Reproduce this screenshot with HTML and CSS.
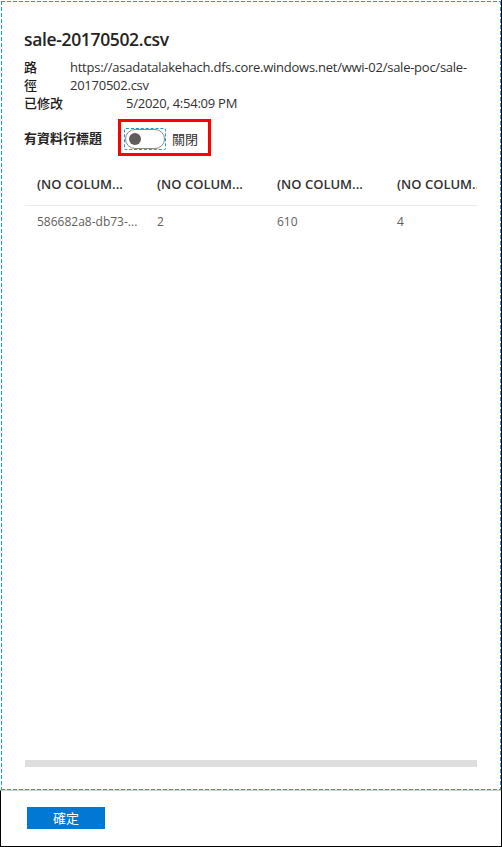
FILE: index.html
```html
<!DOCTYPE html>
<html lang="zh-Hant">
<head>
<meta charset="utf-8">
<link rel="stylesheet" href="styles.css">
</head>
<body>
<div class="frame">
  <div class="main">
    <h1 class="title">sale-20170502.csv</h1>
    <div class="prop prop-path">
      <div class="label label-path">路徑</div>
      <div class="value">https://asadatalakehach.dfs.core.windows.net/wwi-02/sale-poc/sale-20170502.csv</div>
    </div>
    <div class="prop prop-mod">
      <div class="label label-mod">已修改</div>
      <div class="value value-mod">5/2020, 4:54:09 PM</div>
    </div>
    <div class="header-row">
      <div class="label-strong">有資料行標題</div>
      <div class="highlight">
        <div class="toggle-focus">
          <div class="toggle"><span class="knob"></span></div>
        </div>
        <span class="toggle-text">關閉</span>
      </div>
    </div>
    <div class="table-wrap">
      <div class="trow thead">
        <div class="cell">(NO COLUM...</div>
        <div class="cell">(NO COLUM...</div>
        <div class="cell">(NO COLUM...</div>
        <div class="cell">(NO COLUM...</div>
      </div>
      <div class="trow tbody">
        <div class="cell">586682a8-db73-...</div>
        <div class="cell">2</div>
        <div class="cell">610</div>
        <div class="cell">4</div>
      </div>
    </div>
    <div class="spacer"></div>
    <div class="scrollbar"></div>
  </div>
  <div class="footer">
    <button class="btn">確定</button>
  </div>
</div>
</body>
</html>
```
FILE: styles.css
```css
html, body {
  margin: 0;
  padding: 0;
  background: #fff;
}
body {
  font-family: "Open Sans", "Noto Sans CJK TC", sans-serif;
  font-size: 13px;
  color: #323130;
}
.frame {
  width: 502px;
  height: 847px;
  box-sizing: border-box;
  border-right: 1px solid #000;
  display: flex;
  flex-direction: column;
}
.main {
  margin: 1px 0 0 1px;
  height: 789px;
  box-sizing: border-box;
  padding: 1px 1px 1px 23px;
  display: flex;
  flex-direction: column;
  background-image:
    repeating-linear-gradient(90deg, #1aa0dc 0 4px, transparent 4px 6px),
    repeating-linear-gradient(90deg, #1aa0dc 0 4px, transparent 4px 6px),
    repeating-linear-gradient(180deg, #1aa0dc 0 4px, transparent 4px 6px),
    repeating-linear-gradient(180deg, #1aa0dc 0 4px, transparent 4px 6px);
  background-size: 100% 1px, 100% 1px, 1px 100%, 1px 100%;
  background-position: top left, bottom left, top left, top right;
  background-repeat: no-repeat;
}
.title {
  margin: 23px 0 0 0;
  font-size: 17.5px;
  font-weight: 600;
  line-height: 28px;
  color: #252423;
  letter-spacing: -0.35px;
}
.prop {
  display: flex;
  line-height: 18px;
  white-space: nowrap;
}
.prop-path {
  margin-top: 5px;
}
.label {
  font-family: "Noto Sans CJK TC", sans-serif;
  font-weight: 500;
  color: #1b1a19;
}
.label-path {
  width: 16px;
  margin-right: 30px;
  white-space: normal;
}
.value {
  width: 400px;
  letter-spacing: -0.25px;
  white-space: normal;
}
.label-mod {
  flex: 0 0 auto;
}
.value-mod {
  margin-left: 63px;
  white-space: nowrap;
}
.header-row {
  display: flex;
  align-items: center;
  margin-top: 7px;
}
.label-strong {
  font-family: "Noto Sans CJK TC", sans-serif;
  font-weight: 700;
  color: #252423;
  width: 94px;
}
.highlight {
  display: flex;
  align-items: center;
  border: 3px solid #f00;
  padding: 6px 10px 3px 3px;
  gap: 6px;
}
.toggle-focus {
  border: 1px dashed #1a9ad6;
  border-radius: 2px;
  padding: 0;
}
.toggle {
  width: 40px;
  height: 20px;
  box-sizing: border-box;
  border: 1px solid #8a8886;
  border-radius: 10px;
  display: flex;
  align-items: center;
  padding-left: 3px;
}
.knob {
  width: 12px;
  height: 12px;
  border-radius: 50%;
  background: #605e5c;
}
.toggle-text {
  font-family: "Noto Sans CJK TC", sans-serif;
  color: #323130;
  line-height: 18px;
}
.table-wrap {
  width: 452px;
  margin: 7px 0 0 1px;
  overflow: hidden;
}
.trow {
  display: flex;
  width: 600px;
}
.thead {
  height: 42px;
  align-items: center;
  border-bottom: 1px solid #edebe9;
  width: 452px;
  overflow: hidden;
}
.thead .cell {
  font-weight: 600;
  color: #323130;
  font-size: 13px;
}
.cell {
  flex: 0 0 120px;
  box-sizing: border-box;
  padding-left: 12px;
  white-space: nowrap;
  overflow: hidden;
}
.tbody {
  height: 31px;
  align-items: center;
}
.tbody .cell {
  font-size: 12px;
  color: #605e5c;
}
.spacer {
  flex: 1;
}
.scrollbar {
  width: 452px;
  height: 7px;
  margin: 0 0 22px 1px;
  background: #dedede;
}
.footer {
  flex: 1;
  border-top: 1px solid #d0d0d0;
  border-left: 1px solid #000;
  border-bottom: 1px solid #000;
  padding: 16px 0 0 26px;
}
.btn {
  width: 78px;
  height: 22px;
  border: none;
  background: #0078d4;
  color: #fff;
  font-family: "Noto Sans CJK TC", sans-serif;
  font-size: 13px;
  padding: 0;
  line-height: 22px;
  display: block;
}
```
